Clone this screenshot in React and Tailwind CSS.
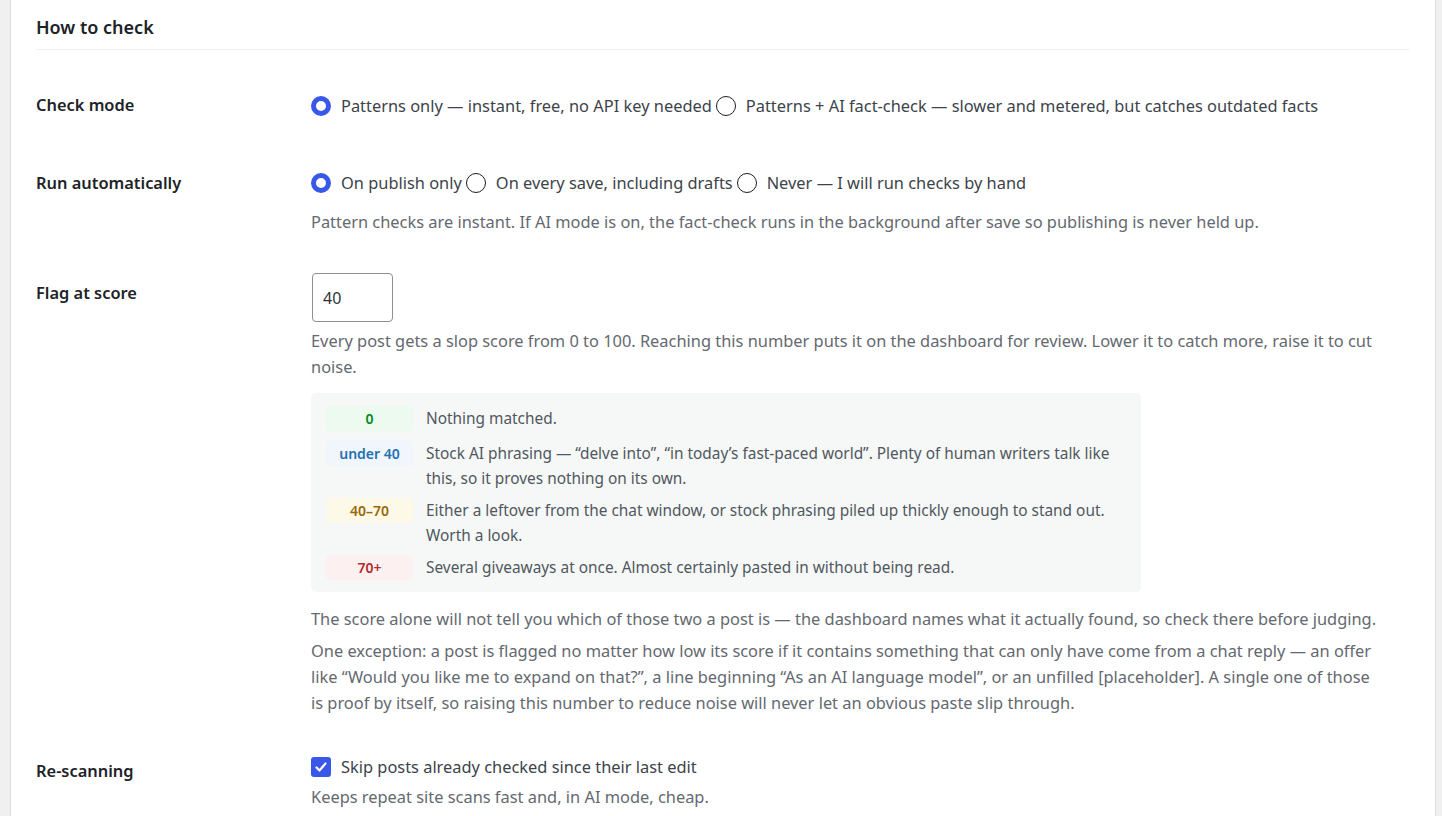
import React from "react";

const font = { fontFamily: '"Noto Sans", "Open Sans", Arial, sans-serif' };

function Radio({ checked, label }) {
  return (
    <label className="inline-flex items-center whitespace-nowrap mr-[4px]">
      {checked ? (
        <span className="w-[20px] h-[20px] rounded-full border-[5px] border-[#3858e9] bg-white shrink-0 mr-[10px]" />
      ) : (
        <span className="w-[20px] h-[20px] rounded-full border-[1.5px] border-[#1e1e1e] bg-white shrink-0 mr-[10px]" />
      )}
      <span>{label}</span>
    </label>
  );
}

function Pill({ bg, color, children }) {
  return (
    <span
      className={`w-[87px] h-[25px] shrink-0 rounded-[3px] flex items-center justify-center text-[14px] font-semibold ${bg} ${color}`}
    >
      {children}
    </span>
  );
}

export default function App() {
  return (
    <div className="min-h-[816px] bg-[#f0f0f1] pl-[10px] pr-[6px]" style={font}>
      <div className="bg-white border-l border-r border-[#dcdcde] min-h-[816px] px-[25px]">
        <h2 className="pt-[15px] pb-[9px] leading-[25px] text-[18px] font-semibold text-[#1d2327] border-b border-[#f0f0f1]">
          How to check
        </h2>

        {/* Check mode */}
        <div className="flex pt-[43px]">
          <div className="w-[275px] shrink-0 text-[16.4px] font-semibold text-[#1d2327] leading-[24px]">
            Check mode
          </div>
          <div className="flex-1 pr-[27px] text-[16.4px] text-[#3c434a] leading-[24px] pt-[1px]">
            <div className="flex flex-wrap">
              <Radio checked label="Patterns only — instant, free, no API key needed" />
              <Radio label="Patterns + AI fact-check — slower and metered, but catches outdated facts" />
            </div>
          </div>
        </div>

        {/* Run automatically */}
        <div className="flex pt-[53px]">
          <div className="w-[275px] shrink-0 text-[16.4px] font-semibold text-[#1d2327] leading-[24px]">
            Run automatically
          </div>
          <div className="flex-1 pr-[27px] text-[16.4px] text-[#3c434a] leading-[24px]">
            <div className="flex flex-wrap">
              <Radio checked label="On publish only" />
              <Radio label="On every save, including drafts" />
              <Radio label="Never — I will run checks by hand" />
            </div>
            <p className="mt-[14px] text-[#646970] leading-[26px]">
              Pattern checks are instant. If AI mode is on, the fact-check runs in the background after save so publishing is never held up.
            </p>
          </div>
        </div>

        {/* Flag at score */}
        <div className="flex pt-[38px]">
          <div className="w-[275px] shrink-0 text-[16.4px] font-semibold text-[#1d2327] leading-[24px] pt-[8px]">
            Flag at score
          </div>
          <div className="flex-1 pr-[27px] text-[16.4px] text-[#646970] leading-[26px]">
            <div className="ml-[1px] w-[81px] h-[49px] border border-[#8c8f94] rounded-[4px] flex items-center pl-[10px] text-[16px] text-[#2c3338]">
              40
            </div>
            <p className="mt-[6px]">
              Every post gets a slop score from 0 to 100. Reaching this number puts it on the dashboard for review. Lower it to catch more, raise it to cut noise.
            </p>
            <div className="mt-[13px] w-[830px] bg-[#f6f7f7] rounded-[5px] pl-[15px] pr-[15px] pt-[13px] pb-[12px] text-[15.4px] text-[#50575e] leading-[25px] flex flex-col">
              <div className="flex items-start gap-[13px]">
                <Pill bg="bg-[#edfaef]" color="text-[#008a20]">0</Pill>
                <span>Nothing matched.</span>
              </div>
              <div className="flex items-start gap-[13px] mt-[10px]">
                <Pill bg="bg-[#f0f6fc]" color="text-[#2271b1]">under 40</Pill>
                <span>Stock AI phrasing — “delve into”, “in today’s fast-paced world”. Plenty of human writers talk like this, so it proves nothing on its own.</span>
              </div>
              <div className="flex items-start gap-[13px] mt-[7px]">
                <Pill bg="bg-[#fcf9e8]" color="text-[#996800]">40–70</Pill>
                <span>Either a leftover from the chat window, or stock phrasing piled up thickly enough to stand out. Worth a look.</span>
              </div>
              <div className="flex items-start gap-[13px] mt-[7px]">
                <Pill bg="bg-[#fcf0f1]" color="text-[#b32d2e]">70+</Pill>
                <span>Several giveaways at once. Almost certainly pasted in without being read.</span>
              </div>
            </div>
            <p className="mt-[14px]">
              The score alone will not tell you which of those two a post is — the dashboard names what it actually found, so check there before judging.
            </p>
            <p className="mt-[6px]">
              One exception: a post is flagged no matter how low its score if it contains something that can only have come from a chat reply — an offer like “Would you like me to expand on that?”, a line beginning “As an AI language model”, or an unfilled [placeholder]. A single one of those is proof by itself, so raising this number to reduce noise will never let an obvious paste slip through.
            </p>
          </div>
        </div>

        {/* Re-scanning */}
        <div className="flex pt-[39px]">
          <div className="w-[275px] shrink-0 text-[16.4px] font-semibold text-[#1d2327] leading-[24px] pt-[4px]">
            Re-scanning
          </div>
          <div className="flex-1 pr-[27px] text-[16.4px] leading-[24px]">
            <label className="flex items-center text-[#3c434a]">
              <span className="w-[20px] h-[20px] rounded-[3px] bg-[#3858e9] flex items-center justify-center mr-[10px] shrink-0">
                <svg width="14" height="14" viewBox="0 0 14 14" fill="none">
                  <path d="M2.5 7.5 L5.5 10.5 L11.5 3.5" stroke="white" strokeWidth="2.2" strokeLinecap="round" strokeLinejoin="round" />
                </svg>
              </span>
              Skip posts already checked since their last edit
            </label>
            <p className="mt-[5px] text-[#646970] leading-[26px]">
              Keeps repeat site scans fast and, in AI mode, cheap.
            </p>
          </div>
        </div>
      </div>
    </div>
  );
}
